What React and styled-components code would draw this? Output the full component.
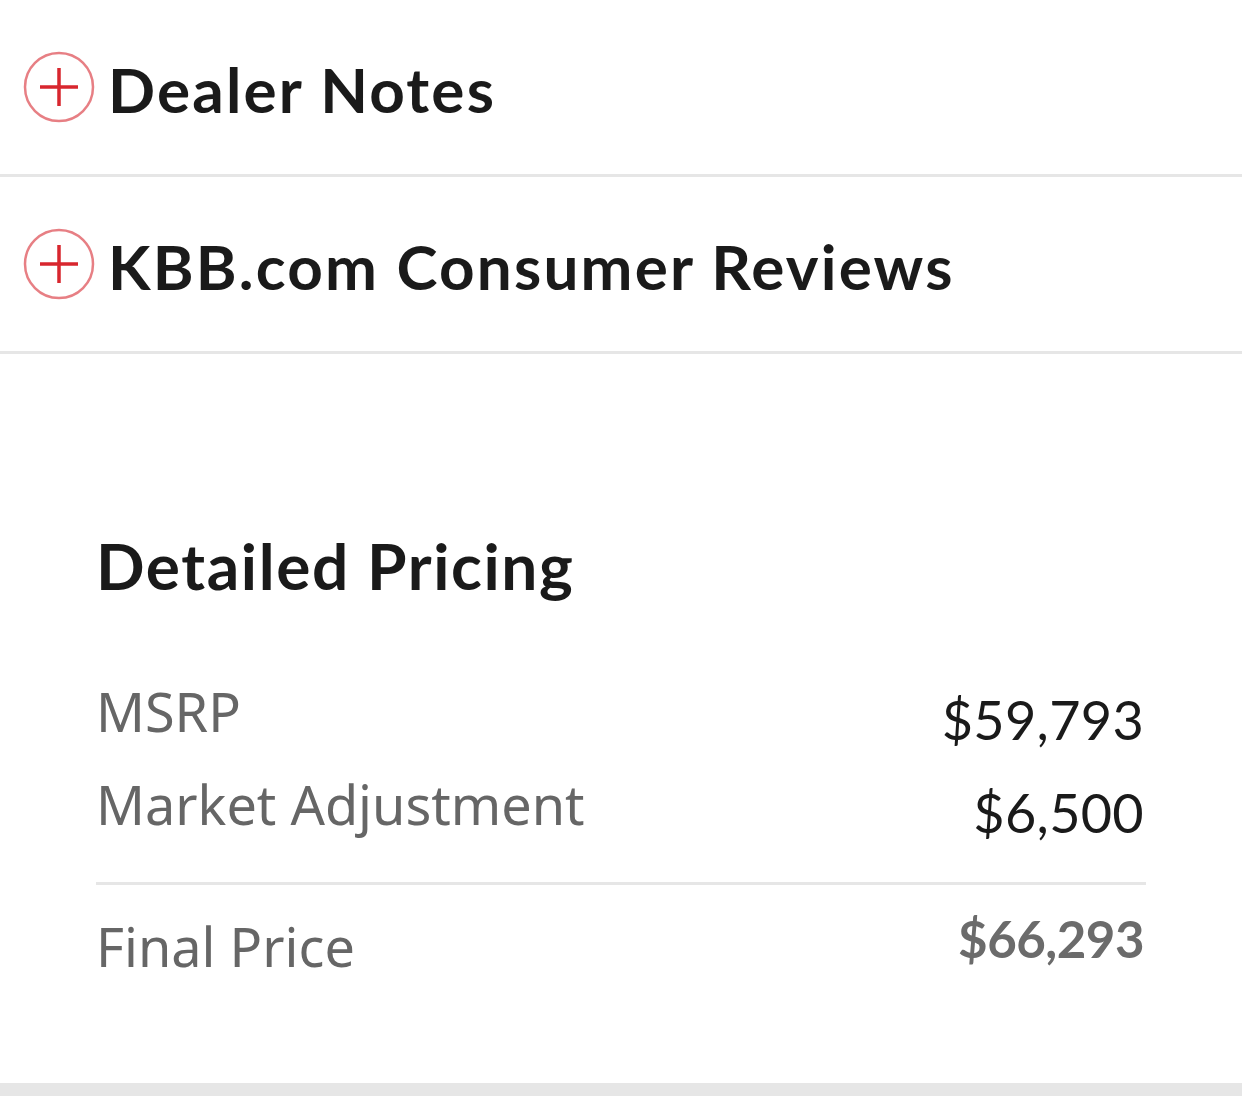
import React from 'react';
import styled, {createGlobalStyle} from "styled-components";

const GlobalStyle = createGlobalStyle`
    html, body {
        margin:0;
        padding:0;
        background:#fff;
    }
    body {
        font-family: "Lato", "Noto Sans", sans-serif;
        color:#1a1a1a;
    }
`;

const Page = styled.div`
    width:1242px;
    height:1096px;
    display:flex;
    flex-direction:column;
    overflow:hidden;
`;

const AccordionRow = styled.div`
    height:174px;
    display:flex;
    align-items:center;
    gap:13px;
    padding-left:23px;
    border-bottom:3px solid #e6e6e6;
`;

const AccordionTitle = styled.div`
    font-family: "Lato", sans-serif;
    font-weight:700;
    font-size:62px;
    letter-spacing:2.2px;
    line-height:1;
    color:#1a1a1a;
    padding-top:4px;
`;

const Pricing = styled.section`
    flex:1;
    padding:180px 96px 0 96px;
    display:flex;
    flex-direction:column;
`;

const PricingTitle = styled.h2`
    margin:0 0 86px 0;
    font-family: "Lato", sans-serif;
    font-weight:700;
    font-size:64px;
    letter-spacing:1.6px;
    line-height:1;
    color:#1a1a1a;
`;

const PriceRow = styled.div`
    display:flex;
    justify-content:space-between;
    align-items:flex-start;
    height:${({h}) => h || 93}px;
`;

const Label = styled.div`
    font-family: "Noto Sans", sans-serif;
    font-size:54px;
    line-height:1;
    color:#666;
`;

const Value = styled.div`
    font-family: "Lato", sans-serif;
    font-size:${({bold}) => bold ? 51 : 54}px;
    line-height:1;
    font-weight:${({bold}) => bold ? 700 : 400};
    letter-spacing:${({bold}) => bold ? -0.5 : 0.3}px;
    color:${({muted}) => muted ? '#6b6b6b' : '#1a1a1a'};
    margin-top:${({shift}) => shift || 0}px;
    margin-right:2px;
`;

const Divider = styled.hr`
    border:none;
    border-top:3px solid #e6e6e6;
    margin:0 0 34px 0;
`;

const BottomBand = styled.div`
    height:13px;
    background:#e6e6e6;
`;

const PlusIcon = () => (
    <svg width="72" height="72" viewBox="0 0 72 72">
        <circle cx="36" cy="36" r="34" fill="none" stroke="#e77f84" strokeWidth="2.5" />
        <path d="M17 36 H55 M36 17 V55" stroke="#d8262e" strokeWidth="3.5" />
    </svg>
);

const items = ["Dealer Notes", "KBB.com Consumer Reviews"];

const App = () => {
    return <Page>
        <GlobalStyle />
        {items.map(t => (
            <AccordionRow key={t}>
                <PlusIcon />
                <AccordionTitle>{t}</AccordionTitle>
            </AccordionRow>
        ))}
        <Pricing>
            <PricingTitle>Detailed Pricing</PricingTitle>
            <PriceRow>
                <Label>MSRP</Label>
                <Value shift={9}>$59,793</Value>
            </PriceRow>
            <PriceRow h={105}>
                <Label>Market Adjustment</Label>
                <Value shift={9}>$6,500</Value>
            </PriceRow>
            <Divider />
            <PriceRow>
                <Label>Final Price</Label>
                <Value bold muted shift={-6}>$66,293</Value>
            </PriceRow>
        </Pricing>
        <BottomBand />
    </Page>;
}

export default App;
